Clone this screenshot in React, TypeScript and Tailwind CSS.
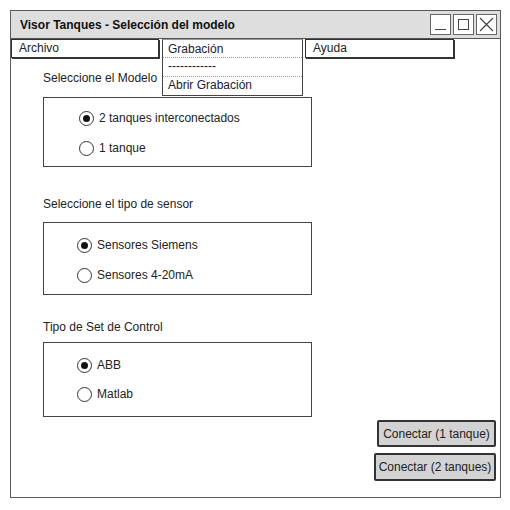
import React from "react";

function Radio({ checked, label }: { checked?: boolean; label: string }) {
  return (
    <div className="flex items-center h-[16px]">
      <span className="w-[15px] h-[15px] rounded-full border-[1.5px] border-[#333] bg-white flex items-center justify-center">
        {checked && <span className="w-[7px] h-[7px] rounded-full bg-[#111]" />}
      </span>
      <span className="ml-[5px] text-[12px] text-[#222]">{label}</span>
    </div>
  );
}

function WinButton({ children }: { children: React.ReactNode }) {
  return (
    <div className="w-[21px] h-[21px] border border-[#666] bg-white flex items-center justify-center">
      {children}
    </div>
  );
}

export default function App() {
  return (
    <div className="w-[510px] h-[510px] bg-white pt-[10px] pl-[10px] font-['Liberation_Sans',sans-serif] text-[#222]">
      <div className="w-[491px] h-[488px] border border-[#5a5a5a] flex flex-col">
        {/* Title bar */}
        <div className="h-[28px] bg-[#dedede] border-b border-[#555] flex items-center justify-between pl-[9px] pr-[3px]">
          <span className="text-[12px] font-bold text-[#111]">Visor Tanques - Selección del modelo</span>
          <div className="flex gap-[2px]">
            <WinButton>
              <span className="w-[11px] h-[1.5px] bg-[#444] mt-[10px]" />
            </WinButton>
            <WinButton>
              <span className="w-[11px] h-[11px] border border-[#444]" />
            </WinButton>
            <WinButton>
              <svg width="15" height="15" viewBox="0 0 15 15">
                <path d="M1 1 L14 14 M14 1 L1 14" stroke="#444" strokeWidth="1.2" />
              </svg>
            </WinButton>
          </div>
        </div>

        {/* Menu bar */}
        <div className="h-[19px] flex">
          <div className="w-[148px] h-[19px] border border-[#333] shadow-[1px_1px_0_#333] px-[7px] text-[12px] leading-[17px]">
            Archivo
          </div>
          <div className="relative ml-[3px] w-[141px] h-[19px]">
            <div className="absolute top-0 left-0 z-10 w-[141px] bg-white border border-[#444] border-t-[#999] border-t-dotted text-[12px] text-[#1a1a3a]">
              <div className="h-[18px] px-[5px] leading-[18px] border-b border-dotted border-[#999]">Grabación</div>
              <div className="h-[19px] px-[5px] leading-[17px] border-b border-dotted border-[#999]">------------</div>
              <div className="h-[18px] px-[5px] leading-[17px]">Abrir Grabación</div>
            </div>
          </div>
          <div className="ml-[2px] w-[149px] h-[19px] border border-[#333] shadow-[1px_1px_0_#333] px-[7px] text-[12px] leading-[17px]">
            Ayuda
          </div>
        </div>

        {/* Content */}
        <div className="flex flex-col pl-[32px] flex-1">
          <div className="mt-[12px] h-[16px] text-[12px] leading-[16px]">Seleccione el Modelo</div>
          <div className="mt-[11px] w-[269px] border border-[#444] pt-[12px] pb-[10px] pl-[35px] flex flex-col gap-[14px]">
            <Radio checked label="2 tanques interconectados" />
            <Radio label="1 tanque" />
          </div>

          <div className="mt-[29px] h-[16px] text-[12px] leading-[16px]">Seleccione el tipo de sensor</div>
          <div className="mt-[10px] w-[269px] border border-[#444] pt-[14px] pb-[11px] pl-[33px] flex flex-col gap-[14px]">
            <Radio checked label="Sensores Siemens" />
            <Radio label="Sensores 4-20mA" />
          </div>

          <div className="mt-[24px] h-[16px] text-[12px] leading-[16px]">Tipo de Set de Control</div>
          <div className="mt-[7px] w-[269px] border border-[#444] pt-[14px] pb-[14px] pl-[33px] flex flex-col gap-[13px]">
            <Radio checked label="ABB" />
            <Radio label="Matlab" />
          </div>

          <div className="mt-[3px] self-end mr-[4px] flex flex-col items-end gap-[6px]">
            <button className="w-[119px] h-[27px] bg-[#d3d3d3] border-2 border-[#333] rounded-[2px] text-[12px] text-[#222]">
              Conectar (1 tanque)
            </button>
            <button className="w-[122px] h-[28px] bg-[#d3d3d3] border-2 border-[#333] rounded-[2px] text-[12px] text-[#222]">
              Conectar (2 tanques)
            </button>
          </div>
        </div>
      </div>
    </div>
  );
}
